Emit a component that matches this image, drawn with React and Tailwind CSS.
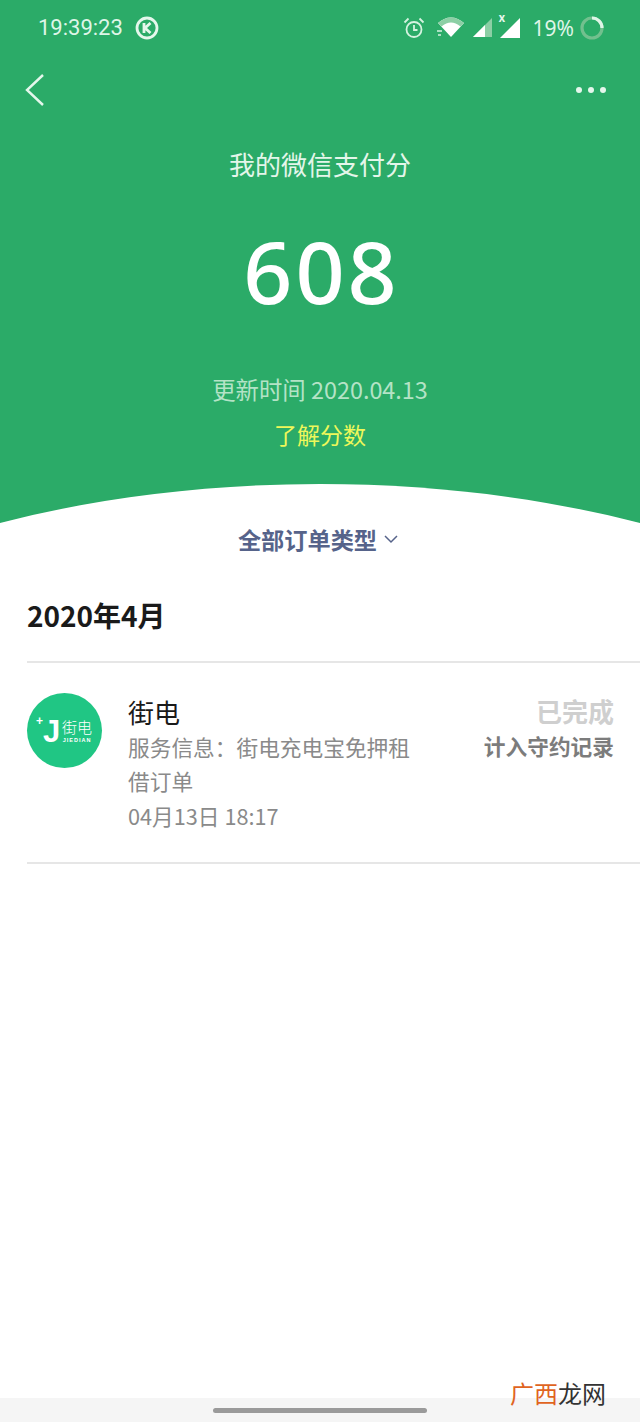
import React from "react";

const F = { fontFamily: '"Noto Sans CJK SC", "Noto Sans", sans-serif' };

function StatusIcons() {
  return (
    <div className="flex items-center">
      <svg width="24" height="24" viewBox="0 0 24 24" fill="none" stroke="#d5f3e0" strokeWidth="1.8" className="mr-[10px]">
        <circle cx="12" cy="13.500" r="7.500" />
        <path d="M12 9V14H15.500M2.500 6.500L6.500 2.500M21.500 6.500L17.500 2.500" />
      </svg>
      <svg width="30" height="24" viewBox="0 0 30 24" className="mr-[6px]">
        <path d="M2 7C10 -0.5 20 -0.5 28 7L15 21Z" fill="#ffffff" />
        <path d="M2 7C10 -0.5 20 -0.5 28 7L24.500 10.500C18 5 12 5 5.500 10.500Z" fill="#8ccfa5" />
        <path d="M1 15H6M2 19H5" stroke="#d5f3e0" strokeWidth="1.500" />
      </svg>
      <svg width="22" height="22" viewBox="0 0 22 22" className="mr-[5px]">
        <path d="M1 20L20 1V20Z" fill="#8ccfa5" />
        <path d="M1 20L13 8V20Z" fill="#ffffff" />
      </svg>
      <div className="relative w-[24px] h-[24px] mr-[10px]">
        <span className="absolute left-[0px] top-[-6px] text-[12px] leading-[14px] font-bold text-[#e5f7ec]" style={F}>x</span>
        <svg width="24" height="22" viewBox="0 0 24 22" className="absolute left-[0px] top-[1px]">
          <path d="M1 21L21 1V21Z" fill="#ffffff" />
        </svg>
      </div>
      <span className="text-[21px] leading-[28px] text-[#dff5e7] mr-[6px]" style={{ fontFamily: '"Noto Sans", sans-serif' }}>19%</span>
      <svg width="24" height="24" viewBox="0 0 24 24" fill="none" strokeWidth="3.200">
        <circle cx="12" cy="12" r="10" stroke="#72c08e" />
        <path d="M12 2A10 10 0 0 1 22 12" stroke="#dff5e7" />
      </svg>
    </div>
  );
}

function Logo() {
  return (
    <div className="w-[75px] h-[75px] rounded-full bg-[#20c684] flex items-center pl-[9px] shrink-0 text-white">
      <div className="relative w-[24px] h-[30px] mr-[2px] shrink-0">
        <span className="absolute left-[0px] top-[-1px] text-[12px] leading-[12px] font-bold" style={{ fontFamily: '"Liberation Sans", sans-serif' }}>+</span>
        <span className="absolute left-[7px] top-[0px] text-[31px] leading-[31px] font-bold" style={{ fontFamily: '"Liberation Sans", sans-serif' }}>J</span>
      </div>
      <div className="flex flex-col items-center gap-[3px]">
        <span className="text-[15px] leading-[15px] font-light" style={F}>街电</span>
        <span className="text-[5.500px] leading-[6px] font-bold tracking-[1px]" style={{ fontFamily: '"Liberation Sans", sans-serif' }}>JIEDIAN</span>
      </div>
    </div>
  );
}

export default function App() {
  return (
    <div className="relative w-[640px] h-[1422px] bg-white flex flex-col overflow-hidden" style={F}>
      <header className="bg-[#2bab68] h-[525px] flex flex-col shrink-0">
        <div className="h-[56px] flex items-center justify-between pl-[38px] pr-[36px] shrink-0">
          <div className="flex items-center">
            <span className="text-[22px] leading-[28px] text-[#dff5e7]" style={{ fontFamily: '"Roboto", sans-serif' }}>19:39:23</span>
            <svg width="24" height="24" viewBox="0 0 24 24" fill="none" className="ml-[12px]">
              <circle cx="12" cy="12" r="10" stroke="#e5f7ec" strokeWidth="2.800" />
              <path d="M9 7V17M15.500 7L10 12L15.500 17" stroke="#e5f7ec" strokeWidth="2.800" />
            </svg>
          </div>
          <StatusIcons />
        </div>
        <div className="h-[68px] flex items-center justify-between pl-[25px] pr-[34px] shrink-0">
          <svg width="20" height="34" viewBox="0 0 20 34" fill="none" stroke="#e5f7ec" strokeWidth="2.400">
            <path d="M18 2L2 17L18 32" />
          </svg>
          <div className="flex gap-[6px]">
            <span className="w-[6px] h-[6px] rounded-full bg-[#e5f7ec]" />
            <span className="w-[6px] h-[6px] rounded-full bg-[#e5f7ec]" />
            <span className="w-[6px] h-[6px] rounded-full bg-[#e5f7ec]" />
          </div>
        </div>
        <h1 className="mt-[20px] text-center text-[26px] leading-[40px] text-[#e4f6ea] font-normal">我的微信支付分</h1>
        <div className="mt-[34px] pl-[3px] text-center text-[86px] leading-[106px] text-white font-medium tracking-[3px]" style={{ fontFamily: '"Noto Sans", sans-serif' }}>608</div>
        <div className="mt-[47px] text-center text-[23.400px] leading-[36px] text-[#b4e3c6]">更新时间 2020.04.13</div>
        <div className="mt-[9px] text-center text-[23px] leading-[36px] text-[#eef75a]">了解分数</div>
        <svg width="640" height="41" viewBox="0 0 640 41" className="mt-auto block" preserveAspectRatio="none">
          <path d="M0 39C100 13 210 0 320 0C430 0 540 13 640 39V41H0Z" fill="#ffffff" />
        </svg>
      </header>

      <div className="mt-[-2px] h-[32px] flex items-center justify-center text-[#56638a] font-bold text-[23.200px] leading-[32px] shrink-0 pr-[4px]">
        <span>全部订单类型</span>
        <svg width="14" height="10" viewBox="0 0 14 10" fill="none" stroke="#56638a" strokeWidth="1.500" className="ml-[7px]">
          <path d="M1 2L7 8L13 2" />
        </svg>
      </div>

      <h2 className="mt-[40px] pl-[27px] text-[28px] leading-[40px] font-bold text-[#1a1a1a]">2020年4月</h2>

      <div className="mt-[26px] ml-[27px] border-y-2 border-[#e6e6e6] h-[203px] flex pt-[30px] shrink-0">
        <Logo />
        <div className="ml-[26px] w-[290px]">
          <div className="text-[26px] leading-[37px] text-[#1a1a1a]">街电</div>
          <p className="text-[21.700px] leading-[34px] text-[#8a8a8a]">服务信息：街电充电宝免押租<br />借订单</p>
          <div className="mt-[1px] text-[21.700px] leading-[34px] text-[#8a8a8a]">04月13日 18:17</div>
        </div>
        <div className="ml-auto pr-[26px] flex flex-col items-end">
          <span className="text-[26px] leading-[36px] font-bold text-[#cfcfcf]">已完成</span>
          <span className="text-[21.700px] leading-[34px] font-bold text-[#7c7c7c]">计入守约记录</span>
        </div>
      </div>

      <div className="mt-auto h-[24px] bg-[#f5f5f5] flex items-center justify-center shrink-0">
        <span className="w-[214px] h-[5px] rounded-full bg-[#9a9a9a]" />
      </div>

      <div className="absolute left-[510px] top-[1376px] text-[24px] leading-[34px]">
        <span className="text-[#e0641f]">广西</span><span className="text-[#333333]">龙网</span>
      </div>
    </div>
  );
}
